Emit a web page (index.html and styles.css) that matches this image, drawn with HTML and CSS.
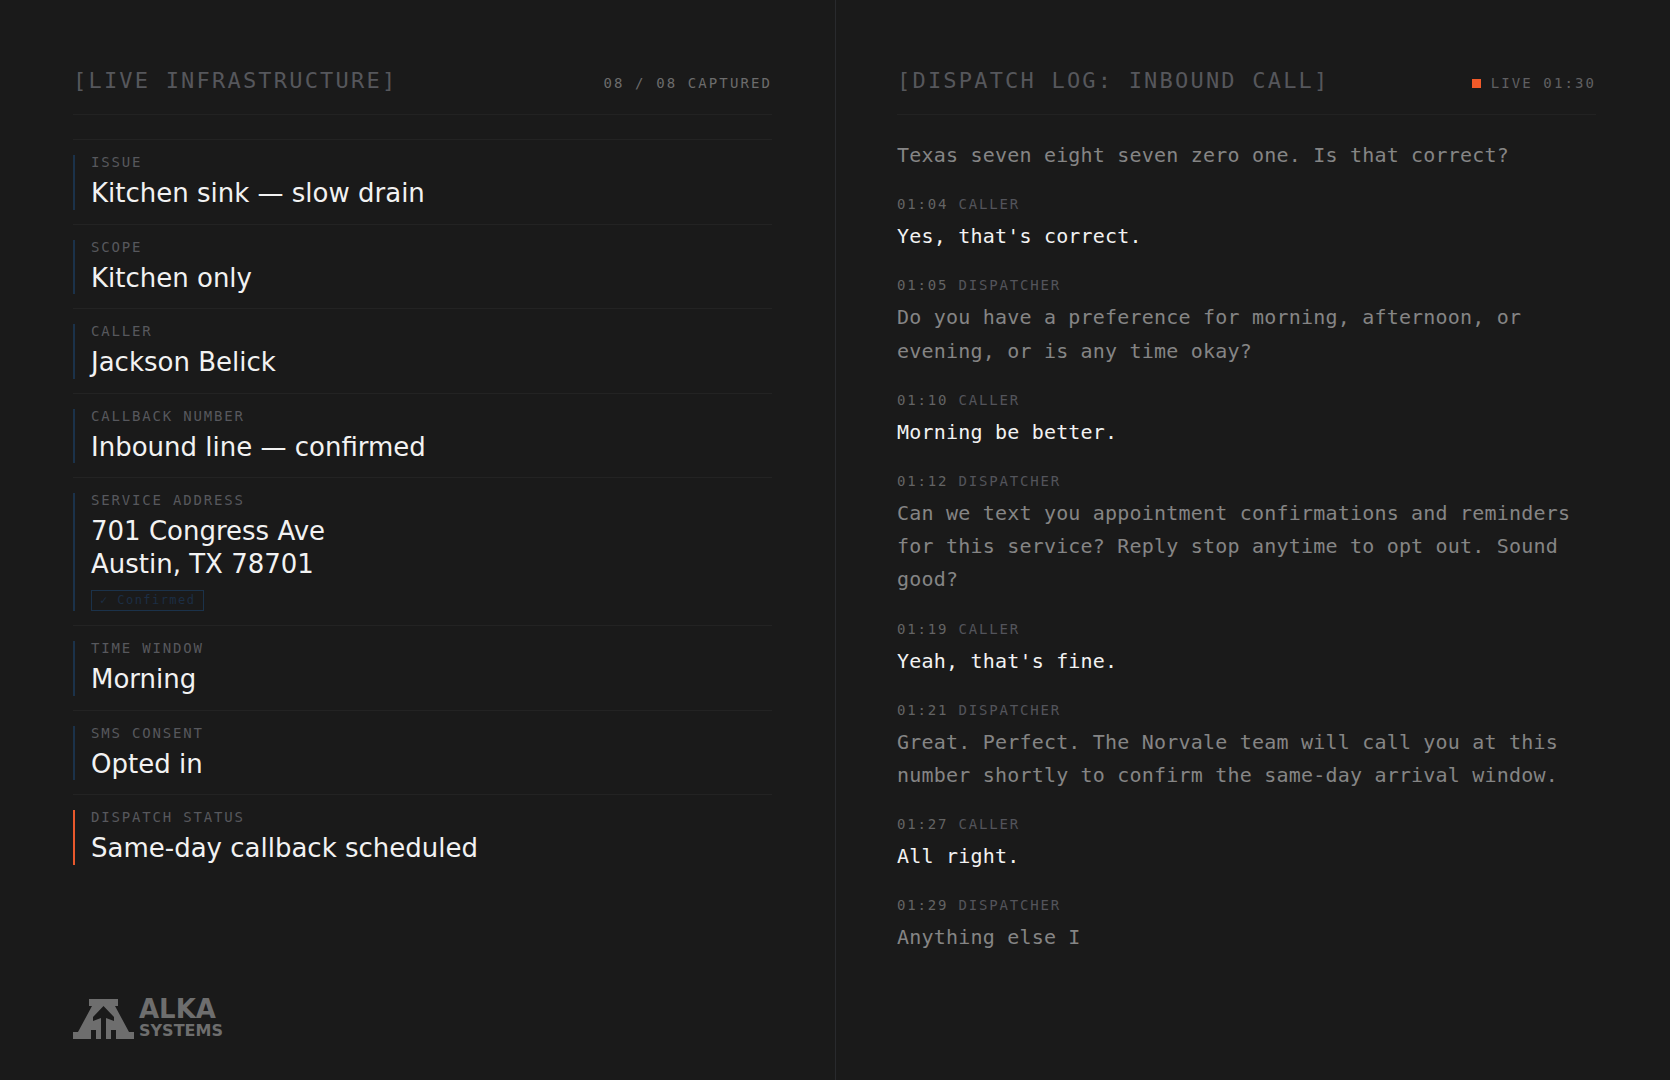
FILE: index.html
```html
<!DOCTYPE html>
<html lang="en">
<head>
    <meta charset="UTF-8">
    <meta name="viewport" content="width=device-width, initial-scale=1.0">
    <title>Alka Systems - Dispatch</title>
    <link rel="stylesheet" href="styles.css">
</head>
<body>
    <main class="dashboard">
        <section class="panel panel-left">
            <header class="panel-header">
                <h2 class="panel-title">[LIVE INFRASTRUCTURE]</h2>
                <span class="panel-status">08 / 08 CAPTURED</span>
            </header>
            <dl class="fields">
                <div class="field">
                    <div class="field-body">
                        <dt>ISSUE</dt>
                        <dd>Kitchen sink — slow drain</dd>
                    </div>
                </div>
                <div class="field">
                    <div class="field-body">
                        <dt>SCOPE</dt>
                        <dd>Kitchen only</dd>
                    </div>
                </div>
                <div class="field">
                    <div class="field-body">
                        <dt>CALLER</dt>
                        <dd>Jackson Belick</dd>
                    </div>
                </div>
                <div class="field">
                    <div class="field-body">
                        <dt>CALLBACK NUMBER</dt>
                        <dd>Inbound line — confirmed</dd>
                    </div>
                </div>
                <div class="field">
                    <div class="field-body">
                        <dt>SERVICE ADDRESS</dt>
                        <dd>701 Congress Ave<br>Austin, TX 78701</dd>
                        <dd class="badge">✓ Confirmed</dd>
                    </div>
                </div>
                <div class="field">
                    <div class="field-body">
                        <dt>TIME WINDOW</dt>
                        <dd>Morning</dd>
                    </div>
                </div>
                <div class="field">
                    <div class="field-body">
                        <dt>SMS CONSENT</dt>
                        <dd>Opted in</dd>
                    </div>
                </div>
                <div class="field">
                    <div class="field-body active">
                        <dt>DISPATCH STATUS</dt>
                        <dd>Same-day callback scheduled</dd>
                    </div>
                </div>
            </dl>
            <footer class="brand">
                <svg class="brand-mark" viewBox="0 0 61 42" width="61" height="42" aria-hidden="true">
                    <path d="M16 1H45V8H42L56 34H61V41H43V32H38V41H33V20L41 23V19L30.5 8L20 19V23L28 20V41H23V32H18V41H0V34H5L19 8H16Z"/>
                </svg>
                <div class="brand-text">
                    <span class="brand-name">ALKA</span>
                    <span class="brand-sub">SYSTEMS</span>
                </div>
            </footer>
        </section>

        <section class="panel panel-right">
            <header class="panel-header">
                <h2 class="panel-title">[DISPATCH LOG: INBOUND CALL]</h2>
                <span class="panel-status dim"><i class="live-dot"></i>LIVE 01:30</span>
            </header>
            <div class="log">
                <article class="entry">
                    <p>Texas seven eight seven zero one. Is that correct?</p>
                </article>
                <article class="entry caller">
                    <h3><time>01:04</time> CALLER</h3>
                    <p>Yes, that's correct.</p>
                </article>
                <article class="entry">
                    <h3><time>01:05</time> DISPATCHER</h3>
                    <p>Do you have a preference for morning, afternoon, or evening, or is any time okay?</p>
                </article>
                <article class="entry caller">
                    <h3><time>01:10</time> CALLER</h3>
                    <p>Morning be better.</p>
                </article>
                <article class="entry">
                    <h3><time>01:12</time> DISPATCHER</h3>
                    <p>Can we text you appointment confirmations and reminders for this service? Reply stop anytime to opt out. Sound good?</p>
                </article>
                <article class="entry caller">
                    <h3><time>01:19</time> CALLER</h3>
                    <p>Yeah, that's fine.</p>
                </article>
                <article class="entry">
                    <h3><time>01:21</time> DISPATCHER</h3>
                    <p>Great. Perfect. The Norvale team will call you at this number shortly to confirm the same-day arrival window.</p>
                </article>
                <article class="entry caller">
                    <h3><time>01:27</time> CALLER</h3>
                    <p>All right.</p>
                </article>
                <article class="entry">
                    <h3><time>01:29</time> DISPATCHER</h3>
                    <p>Anything else I</p>
                </article>
            </div>
        </section>
    </main>
</body>
</html>
```
FILE: styles.css
```css
* {
    box-sizing: border-box;
    margin: 0;
    padding: 0;
}
body {
    background: #1a1a1a;
    color: #f2f2f2;
    font-family: "DejaVu Sans", sans-serif;
}
.dashboard {
    display: grid;
    grid-template-columns: 1fr 1fr;
    min-height: 100vh;
}
.panel {
    display: flex;
    flex-direction: column;
    padding-top: 68px;
    padding-bottom: 40px;
}
.panel-left {
    padding-left: 73px;
    padding-right: 63px;
}
.panel-right {
    padding-left: 61px;
    padding-right: 74px;
    border-left: 1px solid #292a2d;
}

/* headers */
.panel-header {
    display: flex;
    justify-content: space-between;
    align-items: baseline;
    padding-bottom: 20px;
    margin-bottom: 24px;
    border-bottom: 1px solid #222222;
}
.panel-title {
    font-family: "DejaVu Sans Mono", monospace;
    font-size: 22px;
    font-weight: normal;
    line-height: 26px;
    letter-spacing: 0.1em;
    color: #56575c;
}
.panel-status {
    font-family: "DejaVu Sans Mono", monospace;
    font-size: 14px;
    line-height: 16px;
    letter-spacing: 0.15em;
    color: #6c6c6c;
}
.panel-status.dim {
    color: #606062;
}
.live-dot {
    display: inline-block;
    width: 9px;
    height: 9px;
    margin-right: 10px;
    background: #f15a29;
}

/* captured fields */
.field {
    padding: 15px 0 14px;
    border-top: 1px solid #232323;
}
.field-body {
    padding-left: 16px;
    border-left: 2px solid #1b324a;
}
.field-body.active {
    border-left-color: #e8582c;
}
.field dt {
    margin-bottom: 7px;
    font-family: "DejaVu Sans Mono", monospace;
    font-size: 14px;
    line-height: 15px;
    letter-spacing: 0.13em;
    color: #57585d;
}
.field dd {
    font-size: 26px;
    line-height: 1.25;
}
.field .badge {
    width: fit-content;
    margin-top: 10px;
    padding: 0 8px;
    border: 1px solid #1b324a;
    font-family: "DejaVu Sans Mono", monospace;
    font-size: 12px;
    line-height: 19px;
    letter-spacing: 0.12em;
    color: #1c2e44;
}

/* transcript */
.entry {
    margin-bottom: 24px;
    font-family: "DejaVu Sans Mono", monospace;
}
.entry h3 {
    margin-bottom: 8px;
    font-size: 14px;
    font-weight: normal;
    line-height: 16px;
    letter-spacing: 0.13em;
    color: #53545b;
}
.entry time {
    color: #646464;
}
.entry p {
    font-size: 20px;
    line-height: 1.66;
    letter-spacing: 0.01em;
    color: #858585;
}
.entry.caller p {
    color: #f2f2f2;
}

/* logo */
.brand {
    display: flex;
    align-items: center;
    gap: 5px;
    margin-top: auto;
    color: #6e6e6e;
}
.brand-mark {
    fill: currentColor;
}
.brand-text {
    display: flex;
    flex-direction: column;
    font-weight: bold;
}
.brand-name {
    font-size: 26px;
    line-height: 23px;
}
.brand-sub {
    font-size: 16px;
    line-height: 19px;
}
```
